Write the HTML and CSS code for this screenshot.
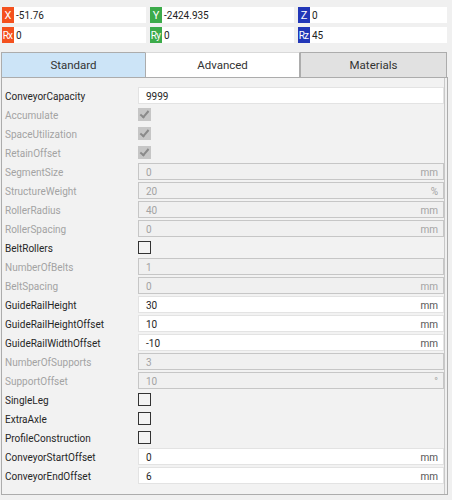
FILE: index.html
```html
<!DOCTYPE html>
<html>
<head>
<meta charset="utf-8">
<link rel="stylesheet" href="styles.css">
</head>
<body>
<div class="coords">
  <div class="coord"><span class="badge red">X</span><span class="field">-51.76</span></div>
  <div class="coord"><span class="badge green">Y</span><span class="field">-2424.935</span></div>
  <div class="coord"><span class="badge blue">Z</span><span class="field">0</span></div>
  <div class="coord"><span class="badge red small">Rx</span><span class="field">0</span></div>
  <div class="coord"><span class="badge green small">Ry</span><span class="field">0</span></div>
  <div class="coord"><span class="badge blue small">Rz</span><span class="field">45</span></div>
</div>
<div class="tabs">
  <div class="tab tab-hover">Standard</div>
  <div class="tab tab-active">Advanced</div>
  <div class="tab">Materials</div>
</div>
<div class="panel">
  <div class="row"><span class="label">ConveyorCapacity</span><span class="input"><span>9999</span></span></div>
  <div class="row off"><span class="label">Accumulate</span><span class="check checked"></span></div>
  <div class="row off"><span class="label">SpaceUtilization</span><span class="check checked"></span></div>
  <div class="row off"><span class="label">RetainOffset</span><span class="check checked"></span></div>
  <div class="row off"><span class="label">SegmentSize</span><span class="input"><span>0</span><span class="unit">mm</span></span></div>
  <div class="row off"><span class="label">StructureWeight</span><span class="input"><span>20</span><span class="unit">%</span></span></div>
  <div class="row off"><span class="label">RollerRadius</span><span class="input"><span>40</span><span class="unit">mm</span></span></div>
  <div class="row off"><span class="label">RollerSpacing</span><span class="input"><span>0</span><span class="unit">mm</span></span></div>
  <div class="row"><span class="label">BeltRollers</span><span class="check"></span></div>
  <div class="row off"><span class="label">NumberOfBelts</span><span class="input"><span>1</span></span></div>
  <div class="row off"><span class="label">BeltSpacing</span><span class="input"><span>0</span><span class="unit">mm</span></span></div>
  <div class="row"><span class="label">GuideRailHeight</span><span class="input"><span>30</span><span class="unit">mm</span></span></div>
  <div class="row"><span class="label">GuideRailHeightOffset</span><span class="input"><span>10</span><span class="unit">mm</span></span></div>
  <div class="row"><span class="label">GuideRailWidthOffset</span><span class="input"><span>-10</span><span class="unit">mm</span></span></div>
  <div class="row off"><span class="label">NumberOfSupports</span><span class="input"><span>3</span></span></div>
  <div class="row off"><span class="label">SupportOffset</span><span class="input"><span>10</span><span class="unit">°</span></span></div>
  <div class="row"><span class="label">SingleLeg</span><span class="check"></span></div>
  <div class="row"><span class="label">ExtraAxle</span><span class="check"></span></div>
  <div class="row"><span class="label">ProfileConstruction</span><span class="check"></span></div>
  <div class="row"><span class="label">ConveyorStartOffset</span><span class="input"><span>0</span><span class="unit">mm</span></span></div>
  <div class="row"><span class="label">ConveyorEndOffset</span><span class="input"><span>6</span><span class="unit">mm</span></span></div>
</div>
</body>
</html>
```
FILE: styles.css
```css
html, body {
  margin: 0;
  padding: 0;
  background: #f0f0f0;
}
body {
  width: 452px;
  height: 500px;
  overflow: hidden;
  font-family: Roboto, "Noto Sans", sans-serif;
  font-size: 10px;
  color: #262626;
}
.coords {
  display: grid;
  grid-template-columns: 144px 144px 149px;
  column-gap: 4px;
  row-gap: 4px;
  padding: 7px 0 0 2px;
}
.coord {
  display: flex;
  height: 16px;
}
.badge {
  width: 12px;
  flex: none;
  color: #fff;
  display: flex;
  align-items: center;
  justify-content: center;
  font-size: 11px;
}
.badge.small {
  font-size: 10px;
  letter-spacing: -0.8px;
  padding-right: 1px;
  box-sizing: border-box;
}
.red { background: #f4511e; }
.green { background: #3cab4a; }
.blue { background: #2237b8; }
.field {
  flex: 1;
  background: #fff;
  display: flex;
  align-items: center;
  padding-left: 2px;
  font-size: 10px;
  color: #222;
}
.tabs {
  display: grid;
  grid-template-columns: 144px 155px 147px;
  margin: 9px 0 0 1px;
  height: 25px;
}
.tab {
  display: flex;
  align-items: center;
  justify-content: center;
  background: #e1e1e1;
  border: 1px solid #acacac;
  border-bottom: none;
  font-size: 11.5px;
  color: #333;
}
.tab-hover {
  background: #cce4f7;
  border-right: none;
}
.tab-active {
  background: #fff;
  border-color: #d9d9d9;
  border-left: 1px solid #acacac;
  border-right: 1px solid #acacac;
}
.panel {
  margin: 0 4px 0 1px;
  border: 1px solid #acacac;
  box-shadow: inset -2px 0 0 #f0f0f0, inset -3px 0 0 #c8c8c8;
  background: #f2f2f2;
  padding: 8px 3px 9px 3px;
  height: 399px;
}
.row {
  display: grid;
  grid-template-columns: 133px 1fr;
  height: 19px;
  align-items: center;
}
.label {
  white-space: nowrap;
  padding-top: 1px;
}
.row.off .label {
  color: #a3a3a3;
}
.input {
  border: 1px solid #e3e3e3;
  background: #fff;
  display: flex;
  align-items: center;
  justify-content: space-between;
  padding: 1px 5px 0 7px;
  box-sizing: border-box;
  height: 17px;
}
.row.off .input {
  background: #f0f0f0;
  border-color: #c6c6c6;
  color: #a3a3a3;
}
.unit {
  color: #555;
}
.row.off .unit {
  color: #a3a3a3;
}
.check {
  width: 11px;
  height: 11px;
  border: 1px solid #333;
  background: #f3f3f3;
  position: relative;
}
.row.off .check {
  border-color: #c6c6c6;
  background: #c6c6c6;
}
.check.checked::after {
  content: "";
  position: absolute;
  left: 3px;
  top: 0px;
  width: 3px;
  height: 7px;
  border: solid #8a8a8a;
  border-width: 0 2px 2px 0;
  transform: rotate(40deg);
}
```
